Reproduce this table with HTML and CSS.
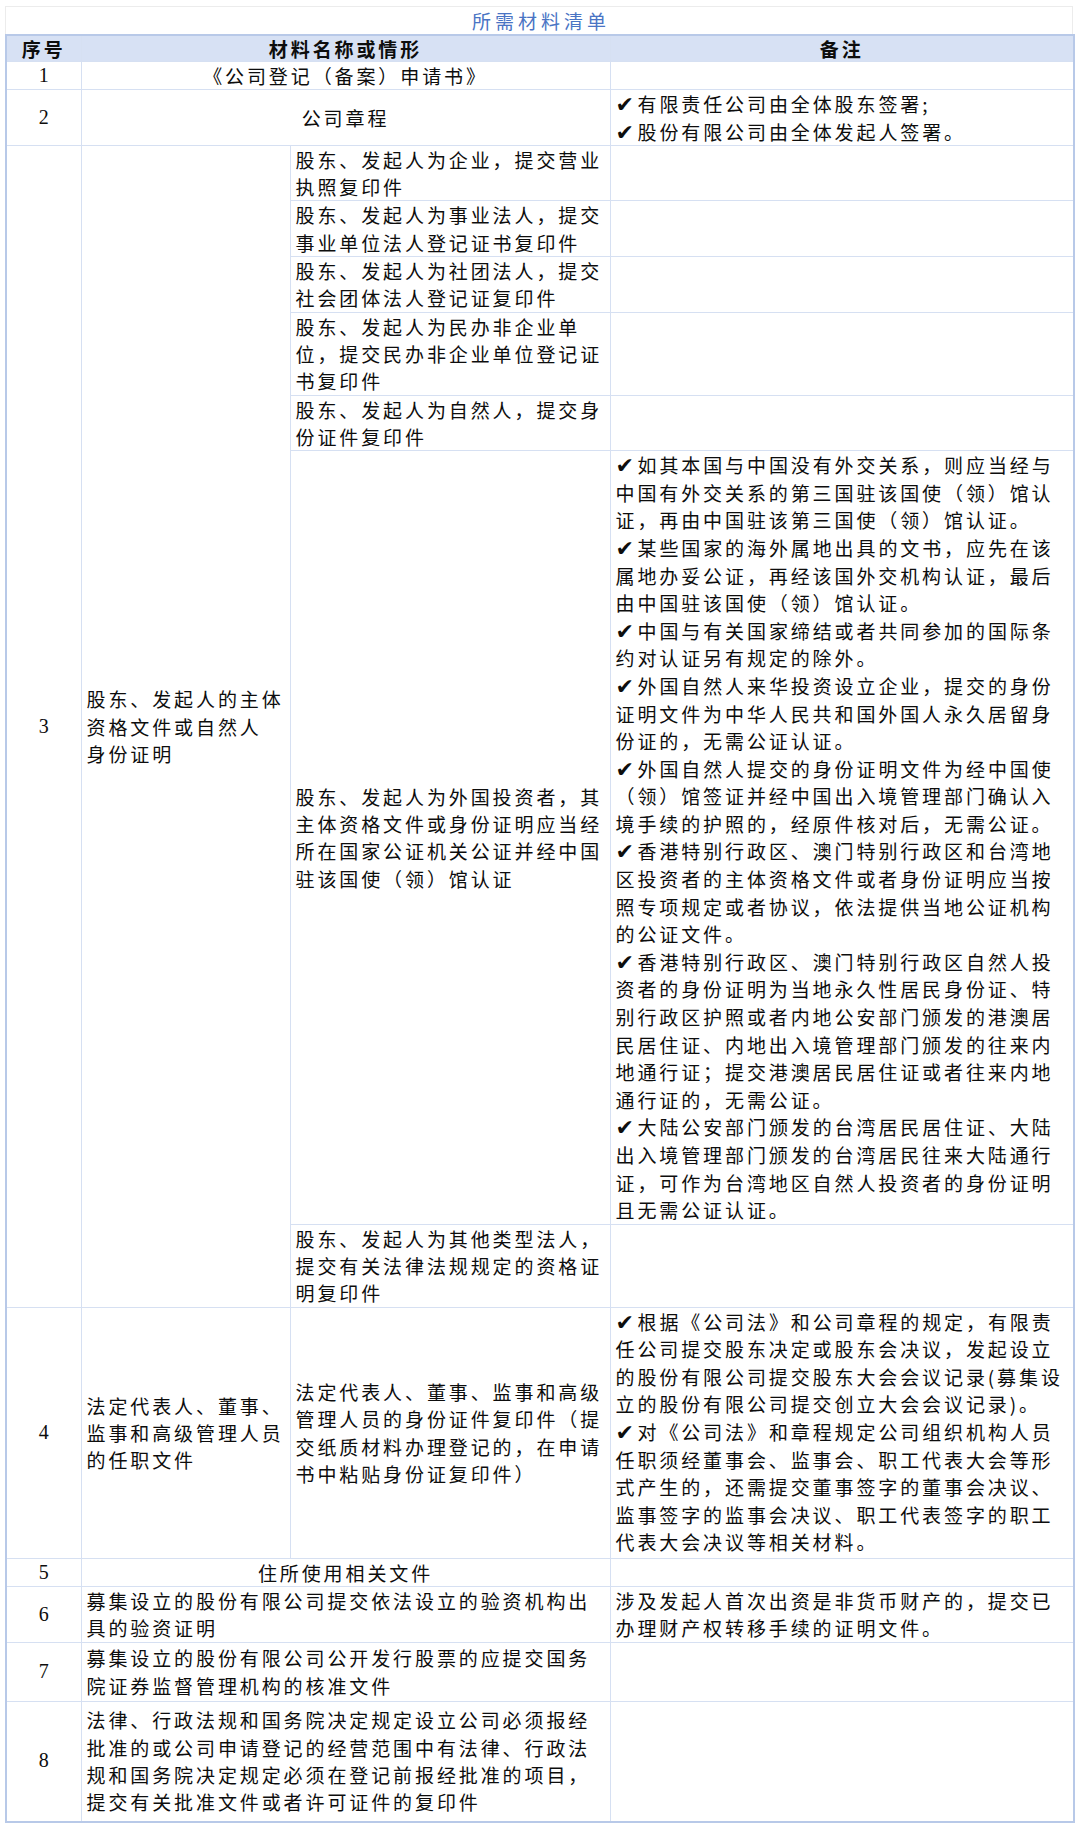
FILE: index.html
```html
<!DOCTYPE html>
<html lang="zh-CN">
<head>
<meta charset="utf-8">
<title>所需材料清单</title>
<link rel="stylesheet" href="styles.css">
</head>
<body>
<div class="sheet">
  <div class="title">所需材料清单</div>
  <table class="list">
    <colgroup>
      <col class="c-no">
      <col class="c-name">
      <col class="c-sub">
      <col class="c-note">
    </colgroup>
    <thead>
      <tr class="head">
        <th>序号</th>
        <th colspan="2">材料名称或情形</th>
        <th>备注</th>
      </tr>
    </thead>
    <tbody>
      <tr>
        <td class="no">1</td>
        <td colspan="2" class="center">《公司登记（备案）申请书》</td>
        <td></td>
      </tr>
      <tr class="r2">
        <td class="no">2</td>
        <td colspan="2" class="center">公司章程</td>
        <td><span class="ck">✔</span>有限责任公司由全体股东签署;<br><span class="ck">✔</span>股份有限公司由全体发起人签署。</td>
      </tr>
      <tr>
        <td class="no" rowspan="7">3</td>
        <td class="mid" rowspan="7">股东、发起人的主体资格文件或自然人<br>身份证明</td>
        <td>股东、发起人为企业，提交营业执照复印件</td>
        <td></td>
      </tr>
      <tr>
        <td>股东、发起人为事业法人，提交事业单位法人登记证书复印件</td>
        <td></td>
      </tr>
      <tr>
        <td>股东、发起人为社团法人，提交社会团体法人登记证复印件</td>
        <td></td>
      </tr>
      <tr>
        <td>股东、发起人为民办非企业单位，提交民办非企业单位登记证书复印件</td>
        <td></td>
      </tr>
      <tr>
        <td>股东、发起人为自然人，提交身份证件复印件</td>
        <td></td>
      </tr>
      <tr>
        <td class="mid">股东、发起人为外国投资者，其主体资格文件或身份证明应当经所在国家公证机关公证并经中国驻该国使（领）馆认证</td>
        <td class="long"><span class="ck">✔</span>如其本国与中国没有外交关系，则应当经与中国有外交关系的第三国驻该国使（领）馆认证，再由中国驻该第三国使（领）馆认证。<br><span class="ck">✔</span>某些国家的海外属地出具的文书，应先在该属地办妥公证，再经该国外交机构认证，最后由中国驻该国使（领）馆认证。<br><span class="ck">✔</span>中国与有关国家缔结或者共同参加的国际条约对认证另有规定的除外。<br><span class="ck">✔</span>外国自然人来华投资设立企业，提交的身份证明文件为中华人民共和国外国人永久居留身份证的，无需公证认证。<br><span class="ck">✔</span>外国自然人提交的身份证明文件为经中国使（领）馆签证并经中国出入境管理部门确认入境手续的护照的，经原件核对后，无需公证。<br><span class="ck">✔</span>香港特别行政区、澳门特别行政区和台湾地区投资者的主体资格文件或者身份证明应当按照专项规定或者协议，依法提供当地公证机构的公证文件。<br><span class="ck">✔</span>香港特别行政区、澳门特别行政区自然人投资者的身份证明为当地永久性居民身份证、特别行政区护照或者内地公安部门颁发的港澳居民居住证、内地出入境管理部门颁发的往来内地通行证；提交港澳居民居住证或者往来内地通行证的，无需公证。<br><span class="ck">✔</span>大陆公安部门颁发的台湾居民居住证、大陆出入境管理部门颁发的台湾居民往来大陆通行证，可作为台湾地区自然人投资者的身份证明且无需公证认证。</td>
      </tr>
      <tr>
        <td>股东、发起人为其他类型法人，提交有关法律法规规定的资格证明复印件</td>
        <td></td>
      </tr>
      <tr class="r4">
        <td class="no">4</td>
        <td class="mid">法定代表人、董事、监事和高级管理人员的任职文件</td>
        <td class="mid">法定代表人、董事、监事和高级管理人员的身份证件复印件（提交纸质材料办理登记的，在申请书中粘贴身份证复印件）</td>
        <td class="long"><span class="ck">✔</span>根据《公司法》和公司章程的规定，有限责任公司提交股东决定或股东会决议，发起设立的股份有限公司提交股东大会会议记录(募集设立的股份有限公司提交创立大会会议记录)。<br><span class="ck">✔</span>对《公司法》和章程规定公司组织机构人员任职须经董事会、监事会、职工代表大会等形式产生的，还需提交董事签字的董事会决议、监事签字的监事会决议、职工代表签字的职工代表大会决议等相关材料。</td>
      </tr>
      <tr>
        <td class="no">5</td>
        <td colspan="2" class="center">住所使用相关文件</td>
        <td></td>
      </tr>
      <tr>
        <td class="no">6</td>
        <td colspan="2" class="mid">募集设立的股份有限公司提交依法设立的验资机构出具的验资证明</td>
        <td class="mid">涉及发起人首次出资是非货币财产的，提交已办理财产权转移手续的证明文件。</td>
      </tr>
      <tr class="r7">
        <td class="no">7</td>
        <td colspan="2" class="mid">募集设立的股份有限公司公开发行股票的应提交国务院证券监督管理机构的核准文件</td>
        <td></td>
      </tr>
      <tr class="r8">
        <td class="no">8</td>
        <td colspan="2" class="mid">法律、行政法规和国务院决定规定设立公司必须报经批准的或公司申请登记的经营范围中有法律、行政法规和国务院决定规定必须在登记前报经批准的项目，提交有关批准文件或者许可证件的复印件</td>
        <td></td>
      </tr>
    </tbody>
  </table>
</div>
</body>
</html>
```

FILE: styles.css
```css
html, body {
  margin: 0;
  padding: 0;
  background: #ffffff;
}

body {
  font-family: "Noto Sans CJK SC", sans-serif;
  color: #0d0d0d;
}

.sheet {
  width: 1068px;
  margin: 6px 0 0 5px;
}

.title {
  height: 28px;
  line-height: 28px;
  text-align: center;
  color: #4a74c4;
  font-family: "Noto Sans CJK SC", sans-serif;
  font-size: 19px;
  letter-spacing: 4px;
  text-indent: 4px;
  border: 1px solid #ececec;
  border-bottom: none;
  box-sizing: border-box;
}

.list {
  width: 1068px;
  border-collapse: collapse;
  table-layout: fixed;
  border: 2px solid #b8c9e8;
  font-size: 19px;
  letter-spacing: 2.9px;
  line-height: 27.3px;
}

.c-no { width: 75px; }
.c-name { width: 209px; }
.c-sub { width: 320px; }
.c-note { width: 464px; }

.list th,
.list td {
  border: 1px solid #d6e0f2;
  padding: 0 5px;
  vertical-align: top;
  text-align: left;
}

.list th {
  background: #d7e1f4;
  font-weight: bold;
  text-align: center;
  vertical-align: middle;
  border-top: 2px solid #b8c9e8;
  line-height: 25px;
}

.list td.no {
  text-align: center;
  vertical-align: middle;
  font-family: "Liberation Serif", serif;
  font-size: 20px;
  letter-spacing: 0;
}

.list td.center {
  text-align: center;
  vertical-align: middle;
}

.list td.mid {
  vertical-align: middle;
}

.list td.long {
  line-height: 27.6px;
}

.ck {
  display: inline-block;
  width: 22px;
  line-height: 0;
  font-family: "DejaVu Sans", sans-serif;
  font-size: 22px;
  letter-spacing: 0;
}

.r2 td { height: 53px; }
.r4 td { height: 250px; }
.r7 td { height: 58px; }
.r8 td { height: 119px; }
```
